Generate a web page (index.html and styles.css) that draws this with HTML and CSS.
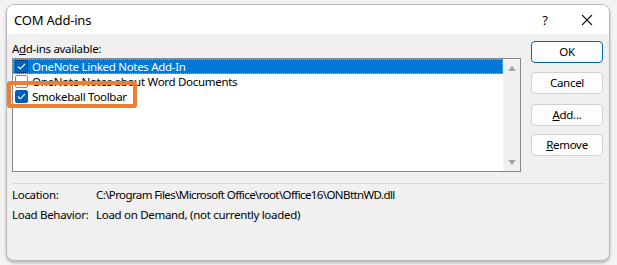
FILE: index.html
```html
<!DOCTYPE html>
<html>
<head>
<meta charset="utf-8">
<link rel="stylesheet" href="styles.css">
</head>
<body>
<div class="dialog">
  <div class="titlebar">
    <span class="title">COM Add-ins</span>
    <span class="help">?</span>
    <span class="close"><svg width="12" height="12" viewBox="0 0 12 12"><path d="M1 1L11 11M11 1L1 11" stroke="#1a1a1a" stroke-width="1.1" fill="none"/></svg></span>
  </div>
  <div class="content">
    <div class="main">
      <div class="left">
        <div class="label">A<u>d</u>d-ins available:</div>
        <div class="listbox">
          <div class="items">
            <div class="item selected"><span class="cb checked"><svg width="9" height="7" viewBox="0 0 9 7"><path d="M1 3.5L3.3 5.8L8 1" stroke="#fff" stroke-width="1.1" fill="none"/></svg></span><span>OneNote Linked Notes Add-In</span></div>
            <div class="item"><span class="cb"></span><span>OneNote Notes about Word Documents</span></div>
            <div class="item"><span class="cb checked"><svg width="9" height="7" viewBox="0 0 9 7"><path d="M1 3.5L3.3 5.8L8 1" stroke="#fff" stroke-width="1.1" fill="none"/></svg></span><span>Smokeball Toolbar</span></div>
          </div>
          <div class="scrollbar">
            <span class="arrow up"></span>
            <span class="arrow down"></span>
          </div>
          <div class="highlight"></div>
        </div>
      </div>
      <div class="buttons">
        <div class="btn default">OK</div>
        <div class="btn b-cancel">Cancel</div>
        <div class="btn b-add"><u>A</u>dd...</div>
        <div class="btn b-remove"><u>R</u>emove</div>
      </div>
    </div>
    <div class="sep"></div>
    <div class="info">
      <div class="row"><span class="k">Location:</span><span class="v path">C:\Program Files\Microsoft Office\root\Office16\ONBttnWD.dll</span></div>
      <div class="row"><span class="k">Load Behavior:</span><span class="v">Load on Demand, (not currently loaded)</span></div>
    </div>
  </div>
</div>
</body>
</html>
```
FILE: styles.css
```css
html, body {
  margin: 0;
  padding: 0;
}
body {
  background: #f3f3f3;
  padding: 4px 0 0 6px;
  font-family: "Noto Sans", "DejaVu Sans", sans-serif;
  font-size: 11.5px;
  letter-spacing: -0.3px;
  color: #000;
  width: 617px;
  height: 265px;
  box-sizing: border-box;
  overflow: hidden;
}
.dialog {
  width: 604px;
  height: 257px;
  box-sizing: border-box;
  border: 1px solid #b9b9b9;
  border-radius: 8px;
  background: #f0f0f0;
  overflow: hidden;
  display: flex;
  flex-direction: column;
  box-shadow: 0 2px 3px rgba(0,0,0,0.25);
}
.titlebar {
  height: 29px;
  background: #fff;
  display: flex;
  align-items: center;
  padding-left: 7px;
  flex: none;
}
.title {
  font-size: 13px;
  letter-spacing: -0.2px;
  flex: 1;
  padding-top: 1px;
}
.help {
  font-size: 13px;
  width: 20px;
  text-align: center;
  margin-right: 26px;
}
.close {
  width: 12px;
  height: 12px;
  margin-right: 16px;
  display: flex;
}
.content {
  padding: 7px 6px 0 5px;
  display: flex;
  flex-direction: column;
}
.main {
  display: flex;
}
.left {
  width: 509px;
  display: flex;
  flex-direction: column;
}
.label {
  height: 16px;
  line-height: 16px;
  margin-bottom: 1px;
}
.listbox {
  position: relative;
  height: 114px;
  box-sizing: border-box;
  border: 1px solid #828790;
  background: #fff;
  display: flex;
}
.items {
  flex: 1;
}
.item {
  height: 15px;
  line-height: 15px;
  display: flex;
  align-items: center;
  padding-left: 2px;
  white-space: nowrap;
}
.item.selected {
  background: #0078d7;
  color: #fff;
  outline: 1px dotted #f4a13a;
  outline-offset: -1px;
}
.cb {
  width: 11px;
  height: 11px;
  border: 1px solid #8a8a8a;
  border-radius: 2px;
  background: #fff;
  margin-right: 4px;
  display: flex;
  align-items: center;
  justify-content: center;
  flex: none;
}
.cb.checked {
  background: #005fb8;
  border-color: #005fb8;
}
.item.selected .cb.checked {
  border-color: #0a3f7a;
  background: #0062c0;
}
.scrollbar {
  width: 17px;
  background: #f0f0f0;
  display: flex;
  flex-direction: column;
  justify-content: space-between;
  align-items: center;
  padding: 7px 0 6px;
  box-sizing: border-box;
}
.arrow {
  width: 0;
  height: 0;
  border-left: 4px solid transparent;
  border-right: 4px solid transparent;
}
.arrow.up {
  border-bottom: 5px solid #a3a3a3;
}
.arrow.down {
  border-top: 5px solid #a3a3a3;
}
.highlight {
  position: absolute;
  left: -6px;
  top: 22px;
  width: 122px;
  height: 19px;
  border: 4px solid #ed7d31;
  border-radius: 3px;
  pointer-events: none;
}
.buttons {
  margin-left: 10px;
  display: flex;
  flex-direction: column;
}
.btn {
  width: 72px;
  height: 22px;
  box-sizing: border-box;
  border: 1px solid #d0d0d0;
  border-radius: 4px;
  background: #fdfdfd;
  text-align: center;
  line-height: 20px;
}
.btn.default {
  border-color: #0067c0;
}
.b-cancel { margin-top: 9px; }
.b-add { margin-top: 10px; }
.b-remove { margin-top: 8px; }
.sep {
  height: 1px;
  background: #d9d9d9;
  margin-top: 11px;
  width: 593px;
}
.info {
  padding-top: 1px;
}
.row {
  display: flex;
  height: 20px;
  line-height: 20px;
  white-space: nowrap;
}
.k {
  width: 84px;
  flex: none;
}
.path {
  letter-spacing: -0.6px;
}
```
